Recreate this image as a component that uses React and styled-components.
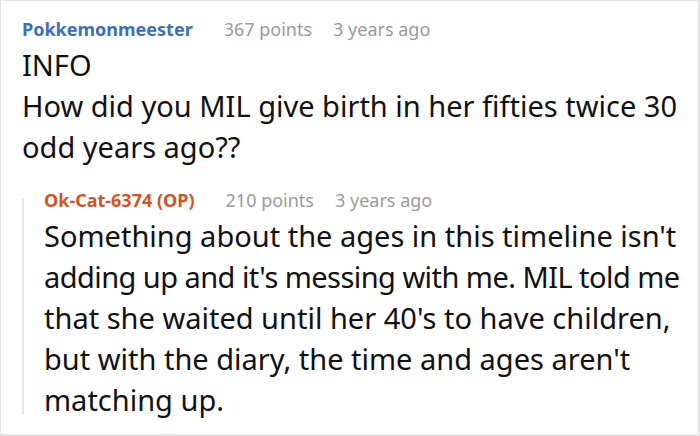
import React from "react";
import styled, { createGlobalStyle } from "styled-components";

const Global = createGlobalStyle`
  html, body { margin: 0; padding: 0; background: #fff; }
  body { font-family: "Noto Sans", "Open Sans", sans-serif; }
`;

const Frame = styled.div`
  box-sizing: border-box;
  width: 700px;
  height: 436px;
  border: solid #e3e3e3;
  border-width: 1px 2px 2px 1px;
  padding: 13px 4px 0 21px;
  overflow: hidden;
`;

const Meta = styled.div`
  display: flex;
  align-items: baseline;
  gap: 31px;
  font-size: 18px;
  line-height: 30px;
  height: 30px;
  white-space: nowrap;
`;

const Author = styled.span`
  font-weight: 700;
  color: ${(p) => p.$color};
`;

const Muted = styled.span`
  color: #9a9a9a;
`;

const MetaGroup = styled.span`
  display: flex;
  gap: 21px;
`;

const Body = styled.div`
  font-size: 29px;
  line-height: 41px;
  color: #111;
  white-space: nowrap;
  p { margin: 0; }
`;

const Line = styled.span`
  display: block;
  letter-spacing: ${(p) => (p.$squeeze ? "-0.55px" : "normal")};
`;

const Reply = styled.div`
  margin-top: 18px;
  display: flex;
  align-items: stretch;
`;

const Rail = styled.div`
  flex: 0 0 2px;
  margin: 14px 0 5px 0;
  background: #e6e6e6;
`;

const ReplyContent = styled.div`
  flex: 1;
  padding-left: 20px;
`;

const Comment = ({ author, color, points, age, children }) => (
  <div>
    <Meta>
      <Author $color={color}>{author}</Author>
      <MetaGroup>
        <Muted>{points}</Muted>
        <Muted>{age}</Muted>
      </MetaGroup>
    </Meta>
    <Body>{children}</Body>
  </div>
);

export default function App() {
  return (
    <>
      <Global />
      <Frame>
        <Comment author="Pokkemonmeester" color="#3b6fbe" points="367 points" age="3 years ago">
          <p>INFO</p>
          <p>
            <Line>How did you MIL give birth in her fifties twice 30</Line>
            <Line>odd years ago??</Line>
          </p>
        </Comment>
        <Reply>
          <Rail />
          <ReplyContent>
            <Comment author="Ok-Cat-6374 (OP)" color="#d4541d" points="210 points" age="3 years ago">
              <p>
                <Line>Something about the ages in this timeline isn't</Line>
                <Line $squeeze>adding up and it's messing with me. MIL told me</Line>
                <Line>that she waited until her 40's to have children,</Line>
                <Line>but with the diary, the time and ages aren't</Line>
                <Line>matching up.</Line>
              </p>
            </Comment>
          </ReplyContent>
        </Reply>
      </Frame>
    </>
  );
}
